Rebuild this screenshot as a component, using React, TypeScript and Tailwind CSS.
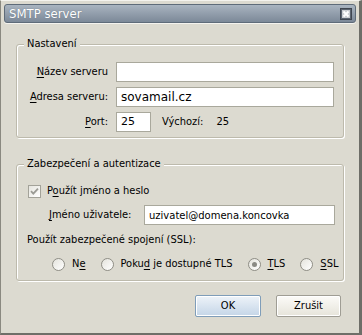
import type { ReactNode } from "react";

const ui = { fontFamily: '"DejaVu Sans Condensed", "DejaVu Sans", sans-serif' };
const field = { fontFamily: '"DejaVu Sans", sans-serif' };

function Key({ children }: { children: ReactNode }) {
  return <span className="underline underline-offset-2">{children}</span>;
}

function TextInput({ value, width, size = "text-[10px]" }: { value: string; width: string; size?: string }) {
  return (
    <div
      className={`flex h-[20px] items-center border border-[#a9a89c] bg-white px-[4px] text-black ${width} ${size}`}
      style={field}
    >
      {value}
    </div>
  );
}

function Radio({ checked, children }: { checked?: boolean; children: ReactNode }) {
  return (
    <div className="flex items-center gap-[7px]">
      <span className="flex h-[13px] w-[13px] items-center justify-center rounded-full border border-[#8f8e86] bg-gradient-to-br from-[#e4e3dc] to-white">
        {checked && <span className="h-[5px] w-[5px] rounded-full bg-[#8a8a84]" />}
      </span>
      <span>{children}</span>
    </div>
  );
}

function Group({ title, className, children }: { title: string; className?: string; children: ReactNode }) {
  return (
    <fieldset
      className={`rounded-[3px] border border-[#bdbaac] shadow-[1px_1px_0_#ffffff,inset_1px_1px_0_#ffffff] ${className ?? ""}`}
    >
      <legend className="ml-[7px] bg-[#dcdad0] px-[3px] leading-[14px]">{title}</legend>
      {children}
    </fieldset>
  );
}

export default function App() {
  return (
    <div
      className="flex h-[335px] w-[362px] flex-col border-t border-l border-t-[#f4f3ee] border-l-[#8a8980] border-r-[3px] border-b-[2px] border-r-[#6e6e68] border-b-[#6e6e68] bg-[#dcdad0] text-[11px] text-black"
      style={ui}
    >
      {/* title bar */}
      <div className="mx-[3px] mt-[3px] flex h-[19px] items-center justify-between rounded-[3px] border border-[#5e6b79] bg-gradient-to-b from-[#a9b4c0] to-[#7c8998] pl-[4px] pr-[3px] shadow-[0_1px_0_#f4f3ee]">
        <span className="text-[13px] text-white [text-shadow:0_0_1px_#5e6b79]">SMTP server</span>
        <svg width="12" height="12" viewBox="0 0 12 12">
          <rect x="0.5" y="0.5" width="11" height="11" fill="#5b6470" stroke="#3f4650" />
          <rect x="2" y="2" width="8" height="8" fill="#c9ccd0" />
          <path d="M3.5 3.5 L8.5 8.5 M8.5 3.5 L3.5 8.5" stroke="#ffffff" strokeWidth="1.8" />
        </svg>
      </div>

      <div className="flex flex-col pl-[15px] pr-[15px]">
        <Group title="Nastavení" className="mt-[14px] pb-[5px] pt-[11px]">
          <div className="flex flex-col gap-[5px]">
            <div className="flex items-center">
              <span className="w-[91px] text-right">
                <Key>N</Key>ázev serveru
              </span>
              <div className="ml-[8px]">
                <TextInput value="" width="w-[218px]" />
              </div>
            </div>
            <div className="flex items-center">
              <span className="w-[91px] text-right">
                <Key>A</Key>dresa serveru:
              </span>
              <div className="ml-[8px]">
                <TextInput value="sovamail.cz" width="w-[218px]" size="text-[12px]" />
              </div>
            </div>
            <div className="flex items-center">
              <span className="w-[91px] text-right">
                <Key>P</Key>ort:
              </span>
              <div className="ml-[8px]">
                <TextInput value="25" width="w-[35px]" size="text-[11px]" />
              </div>
              <span className="ml-[11px]">Výchozí:</span>
              <span className="ml-[13px]">25</span>
            </div>
          </div>
        </Group>

        <Group title="Zabezpečení a autentizace" className="mt-[19px] pb-[8px] pt-[12px]">
          <div className="flex h-[16px] items-center pl-[11px]">
            <span className="flex h-[13px] w-[13px] items-center justify-center border border-[#a3a299] bg-gradient-to-br from-[#e6e5df] to-white">
              <svg width="9" height="9" viewBox="0 0 9 9">
                <path d="M1 4.2 L3.3 6.6 L8 1.6" fill="none" stroke="#9b9b95" strokeWidth="1.8" />
              </svg>
            </span>
            <span className="ml-[6px]">
              P<Key>o</Key>užít jméno a heslo
            </span>
          </div>
          <div className="mt-[6px] flex items-center pl-[32px]">
            <span>
              <Key>J</Key>méno uživatele:
            </span>
            <div className="ml-auto mr-[8px]">
              <TextInput value="uzivatel@domena.koncovka" width="w-[191px]" />
            </div>
          </div>
          <div className="mt-[8px] pl-[10px] leading-[14px]">Použít zabezpečené spojení (SSL):</div>
          <div className="mt-[9px] flex h-[16px] items-center gap-[15px] pl-[35px]">
            <Radio>
              N<Key>e</Key>
            </Radio>
            <Radio>
              Poku<Key>d</Key> je dostupné TLS
            </Radio>
            <Radio checked>
              <Key>T</Key>LS
            </Radio>
            <Radio>
              <Key>S</Key>SL
            </Radio>
          </div>
        </Group>

        <div className="mt-[14px] flex justify-end gap-[15px] pr-[3px]">
          <button className="h-[22px] w-[66px] rounded-[2px] border border-[#7f9db9] bg-gradient-to-b from-[#eef3f9] to-[#c4d5e7] shadow-[inset_0_0_0_1px_#ffffff]">
            OK
          </button>
          <button className="h-[22px] w-[65px] rounded-[2px] border border-[#9f9d94] bg-gradient-to-b from-[#fcfbf8] to-[#e6e4da] shadow-[inset_0_0_0_1px_#ffffff]">
            Zrušit
          </button>
        </div>
      </div>
    </div>
  );
}
